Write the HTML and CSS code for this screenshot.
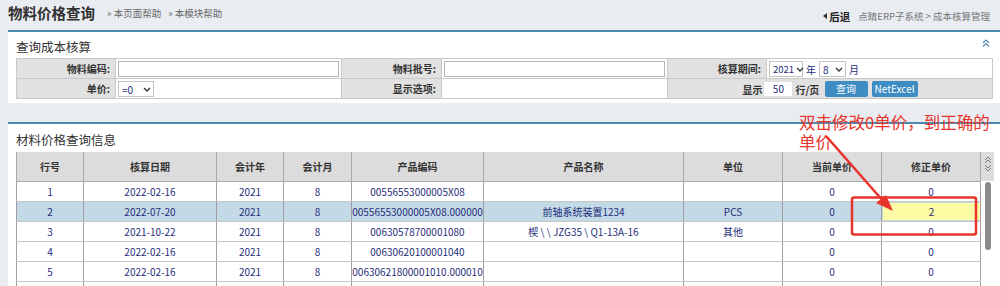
FILE: index.html
```html
<!DOCTYPE html>
<html lang="zh-CN">
<head>
<meta charset="utf-8">
<title>物料价格查询</title>
<link rel="stylesheet" href="styles.css">
</head>
<body>
<header class="topbar">
  <div class="topbar-left">
    <h1 class="page-title">物料价格查询</h1>
    <a class="help-link">» 本页面帮助</a>
    <a class="help-link">» 本模块帮助</a>
  </div>
  <div class="topbar-right">
    <span class="back"><span class="back-tri"></span>后退</span>
    <span class="crumbs">点睛ERP子系统 &gt; 成本核算管理</span>
  </div>
</header>

<section class="panel panel-query">
  <div class="panel-head">
    <span class="panel-title">查询成本核算</span>
    <svg class="collapse" width="8" height="8" viewBox="0 0 8 8"><polyline points="1,4 4,1 7,4" fill="none" stroke="#5b87a8" stroke-width="1.2"/><polyline points="1,7.5 4,4.5 7,7.5" fill="none" stroke="#5b87a8" stroke-width="1.2"/></svg>
  </div>
  <table class="form-table">
    <colgroup><col class="c-l1"><col class="c-f1"><col class="c-l2"><col class="c-f2"><col class="c-l3"><col class="c-f3"></colgroup>
    <tr>
      <th>物料编码:</th>
      <td><span class="textbox tb-wide"></span></td>
      <th>物料批号:</th>
      <td><span class="textbox tb-wide"></span></td>
      <th>核算期间:</th>
      <td class="period">
        <span class="select sel-year">2021<svg class="chev" width="8" height="5" viewBox="0 0 8 5"><polyline points="1,1 4,4 7,1" fill="none" stroke="#333" stroke-width="1.3"/></svg></span><span class="unit">年</span><span class="select sel-month">8<svg class="chev" width="8" height="5" viewBox="0 0 8 5"><polyline points="1,1 4,4 7,1" fill="none" stroke="#333" stroke-width="1.3"/></svg></span><span class="unit">月</span>
      </td>
    </tr>
    <tr>
      <th>单价:</th>
      <td><span class="select sel-op">=0<svg class="chev" width="8" height="5" viewBox="0 0 8 5"><polyline points="1,1 4,4 7,1" fill="none" stroke="#333" stroke-width="1.3"/></svg></span></td>
      <th>显示选项:</th>
      <td></td>
      <th colspan="2" class="paging">
        <span>显示</span><span class="textbox tb-rows">50</span><span>行/页</span>
        <span class="btn btn-query">查询</span><span class="btn btn-excel">NetExcel</span>
      </th>
    </tr>
  </table>
</section>

<section class="panel panel-list">
  <div class="panel-head list-head">
    <span class="panel-title">材料价格查询信息</span>
  </div>
  <div class="grid-wrap">
    <table class="grid">
      <colgroup>
        <col class="g1"><col class="g2"><col class="g3"><col class="g4"><col class="g5"><col class="g6"><col class="g7"><col class="g8"><col class="g9">
      </colgroup>
      <thead>
        <tr><th>行号</th><th>核算日期</th><th>会计年</th><th>会计月</th><th>产品编码</th><th>产品名称</th><th>单位</th><th>当前单价</th><th>修正单价</th></tr>
      </thead>
      <tbody>
        <tr><td>1</td><td>2022-02-16</td><td>2021</td><td>8</td><td class="clip">00556553000005X08</td><td></td><td></td><td>0</td><td>0</td></tr>
        <tr class="selected"><td>2</td><td>2022-07-20</td><td>2021</td><td>8</td><td class="clip">00556553000005X08.000000</td><td>前轴系统装置1234</td><td>PCS</td><td>0</td><td class="editing"><span class="edit-box">2</span></td></tr>
        <tr><td>3</td><td>2021-10-22</td><td>2021</td><td>8</td><td class="clip">00630578700001080</td><td>楔 \ \ JZG35 \ Q1-13A-16</td><td>其他</td><td>0</td><td>0</td></tr>
        <tr><td>4</td><td>2022-02-16</td><td>2021</td><td>8</td><td class="clip">00630620100001040</td><td></td><td></td><td>0</td><td>0</td></tr>
        <tr><td>5</td><td>2022-02-16</td><td>2021</td><td>8</td><td class="clip">00630621800001010.000010</td><td></td><td></td><td>0</td><td>0</td></tr>
        <tr class="cut"><td></td><td></td><td></td><td></td><td></td><td></td><td></td><td></td><td></td></tr>
      </tbody>
    </table>
    <div class="scroll-col">
      <div class="scroll-head">
        <svg width="8" height="16" viewBox="0 0 8 16"><polyline points="1,4 4,1 7,4" fill="none" stroke="#777" stroke-width="1"/><polyline points="1,7 4,4 7,7" fill="none" stroke="#777" stroke-width="1"/><polyline points="1,9 4,12 7,9" fill="none" stroke="#777" stroke-width="1"/><polyline points="1,12 4,15 7,12" fill="none" stroke="#777" stroke-width="1"/></svg>
      </div>
      <div class="scroll-track"><div class="scroll-thumb"></div></div>
    </div>
  </div>
</section>

<div class="annotation-text"><div>双击修改0单价，到正确的</div><div>单价</div></div>
<svg class="annotation-shapes" width="1000" height="286" viewBox="0 0 1000 286">
  <line x1="826" y1="136" x2="884" y2="202" stroke="#e8352b" stroke-width="2.6"/>
  <polygon points="893,211 876,203 886,195" fill="#e8352b"/>
  <rect x="852" y="197.5" width="124" height="37" rx="2" fill="none" stroke="#e8352b" stroke-width="2.5"/>
</svg>
</body>
</html>
```

FILE: styles.css
```css
* { box-sizing: border-box; }
html, body { margin: 0; padding: 0; }
body {
  width: 1000px;
  height: 286px;
  overflow: hidden;
  background: #e9edf1;
  font-family: "Noto Sans CJK SC", "Noto Sans", sans-serif;
  color: #333;
  position: relative;
}

/* top bar */
.topbar {
  height: 30px;
  display: flex;
  justify-content: space-between;
  align-items: center;
  padding: 0 10px 4px 8px;
}
.topbar-left { display: flex; align-items: center; }
.page-title {
  margin: 0 12px 0 0;
  font-size: 14.5px;
  font-weight: 700;
  color: #2f2f2f;
  line-height: 20px;
}
.help-link {
  font-size: 9.5px;
  color: #666;
  margin-right: 7px;
}
.topbar-right { display: flex; align-items: center; padding-top: 6px; }
.back {
  font-size: 10.5px;
  font-weight: 700;
  color: #222;
  display: flex;
  align-items: center;
  margin-right: 8px;
}
.back-tri {
  width: 0; height: 0;
  border-top: 3px solid transparent;
  border-bottom: 3px solid transparent;
  border-right: 4px solid #333;
  margin-right: 2px;
}
.crumbs { font-size: 9.5px; color: #777; }

/* panels */
.panel {
  margin-left: 8px;
  background: #fff;
  border-top: 2px solid #4a89ae;
}
.panel-query { padding: 0 8px 4px 8px; }
.panel-list { margin-top: 19px; padding: 0 7px 0 8px; }
.panel-head {
  height: 26px;
  padding-top: 2px;
  display: flex;
  justify-content: space-between;
  align-items: center;
}
.list-head { height: 28px; padding-top: 3px; }
.panel-title {
  font-size: 12.5px;
  color: #333;
}
.collapse { margin-right: 2px; margin-top: -6px; }

/* form table */
.form-table {
  width: 976px;
  table-layout: fixed;
  border-collapse: collapse;
}
.c-l1 { width: 99px; } .c-f1 { width: 226px; }
.c-l2 { width: 100px; } .c-f2 { width: 226px; }
.c-l3 { width: 99px; } .c-f3 { width: 226px; }
.form-table th, .form-table td {
  border: 1px solid #c9c9c9;
  height: 20px;
  padding: 0 2px;
  font-size: 10px;
  white-space: nowrap;
}
.form-table th {
  background: #e1e1e1;
  text-align: right;
  padding-right: 5px;
  font-weight: 700;
  color: #333;
}
.form-table td { background: #fff; }
.textbox {
  display: inline-block;
  vertical-align: middle;
  height: 16px;
  border: 1px solid #b5b5b5;
  background: #fff;
  font-weight: 400;
  color: #1f2d7a;
  font-size: 10px;
  line-height: 14px;
}
.tb-wide { width: 100%; }
.select {
  display: inline-flex;
  align-items: center;
  justify-content: space-between;
  vertical-align: middle;
  height: 16px;
  border: 1px solid #c3c3c3;
  background: #fff;
  padding: 0 2px 0 3px;
  font-size: 10px;
  color: #1f2d7a;
}
.sel-year { width: 34px; font-size: 9.5px; }
.sel-month { width: 27px; }
.sel-op { width: 36px; }
.chev { flex: none; margin-left: 2px; }
.unit {
  display: inline-block;
  font-size: 10px;
  color: #1f2d7a;
  margin: 0 3px 0 3px;
  vertical-align: middle;
}
.paging {
  text-align: center !important;
  padding: 0 !important;
}
.paging > span { vertical-align: middle; }
.tb-rows {
  width: 30px;
  text-align: center;
  border-color: #e1e1e1;
  margin: 0 2px 0 1px;
}
.btn {
  display: inline-block;
  height: 16px;
  line-height: 16px;
  border-radius: 2px;
  background: #3d8cc2;
  color: #fff;
  font-weight: 400;
  font-size: 10px;
  text-align: center;
}
.btn-query { width: 43px; margin-left: 3px; }
.btn-excel { width: 46px; margin-left: 4px; }

/* grid */
.grid-wrap { display: flex; align-items: flex-start; }
.grid {
  width: 964px;
  table-layout: fixed;
  border-collapse: collapse;
}
.g1 { width: 67px; } .g2 { width: 133px; } .g3 { width: 67px; }
.g4 { width: 68px; } .g5 { width: 132px; } .g6 { width: 200px; }
.g7 { width: 99px; } .g8 { width: 99px; } .g9 { width: 99px; }
.grid th, .grid td {
  border: 1px solid #c6c6c6;
  text-align: center;
  white-space: nowrap;
  overflow: hidden;
  padding: 0;
}
.grid th {
  height: 29px;
  background: #dcdcdc;
  font-size: 10px;
  font-weight: 700;
  color: #333;
  border-color: #a9a9a9;
  border-top: none;
}
.grid td {
  height: 20px;
  font-size: 10px;
  color: #1f2d7a;
  border-left-color: #9f9f9f;
  border-right-color: #9f9f9f;
}
.grid td.clip { text-overflow: clip; }
.grid tr.cut td { height: 6px; }
.grid tr.selected td { background: #c3d9e6; }
.grid td.editing { padding: 1px 0 1px 1px; }
.edit-box {
  display: block;
  height: 17px;
  line-height: 17px;
  background: #fdfba4;
  color: #1f2d7a;
}

.scroll-col { width: 13px; }
.scroll-head {
  height: 29px;
  background: #dcdcdc;
  display: flex;
  justify-content: center;
  padding-top: 4px;
}
.scroll-track {
  height: 105px;
  background: #fff;
  padding: 1px 3px 0 4px;
}
.scroll-thumb {
  width: 6px;
  height: 68px;
  border-radius: 3px;
  background: #8a8a8a;
}

/* annotation overlay */
.annotation-text {
  position: absolute;
  left: 799px;
  top: 112px;
  font-size: 16.5px;
  line-height: 20px;
  color: #e8352b;
  font-family: "Noto Sans CJK SC", sans-serif;
}
.annotation-shapes {
  position: absolute;
  left: 0;
  top: 0;
  pointer-events: none;
}
```
